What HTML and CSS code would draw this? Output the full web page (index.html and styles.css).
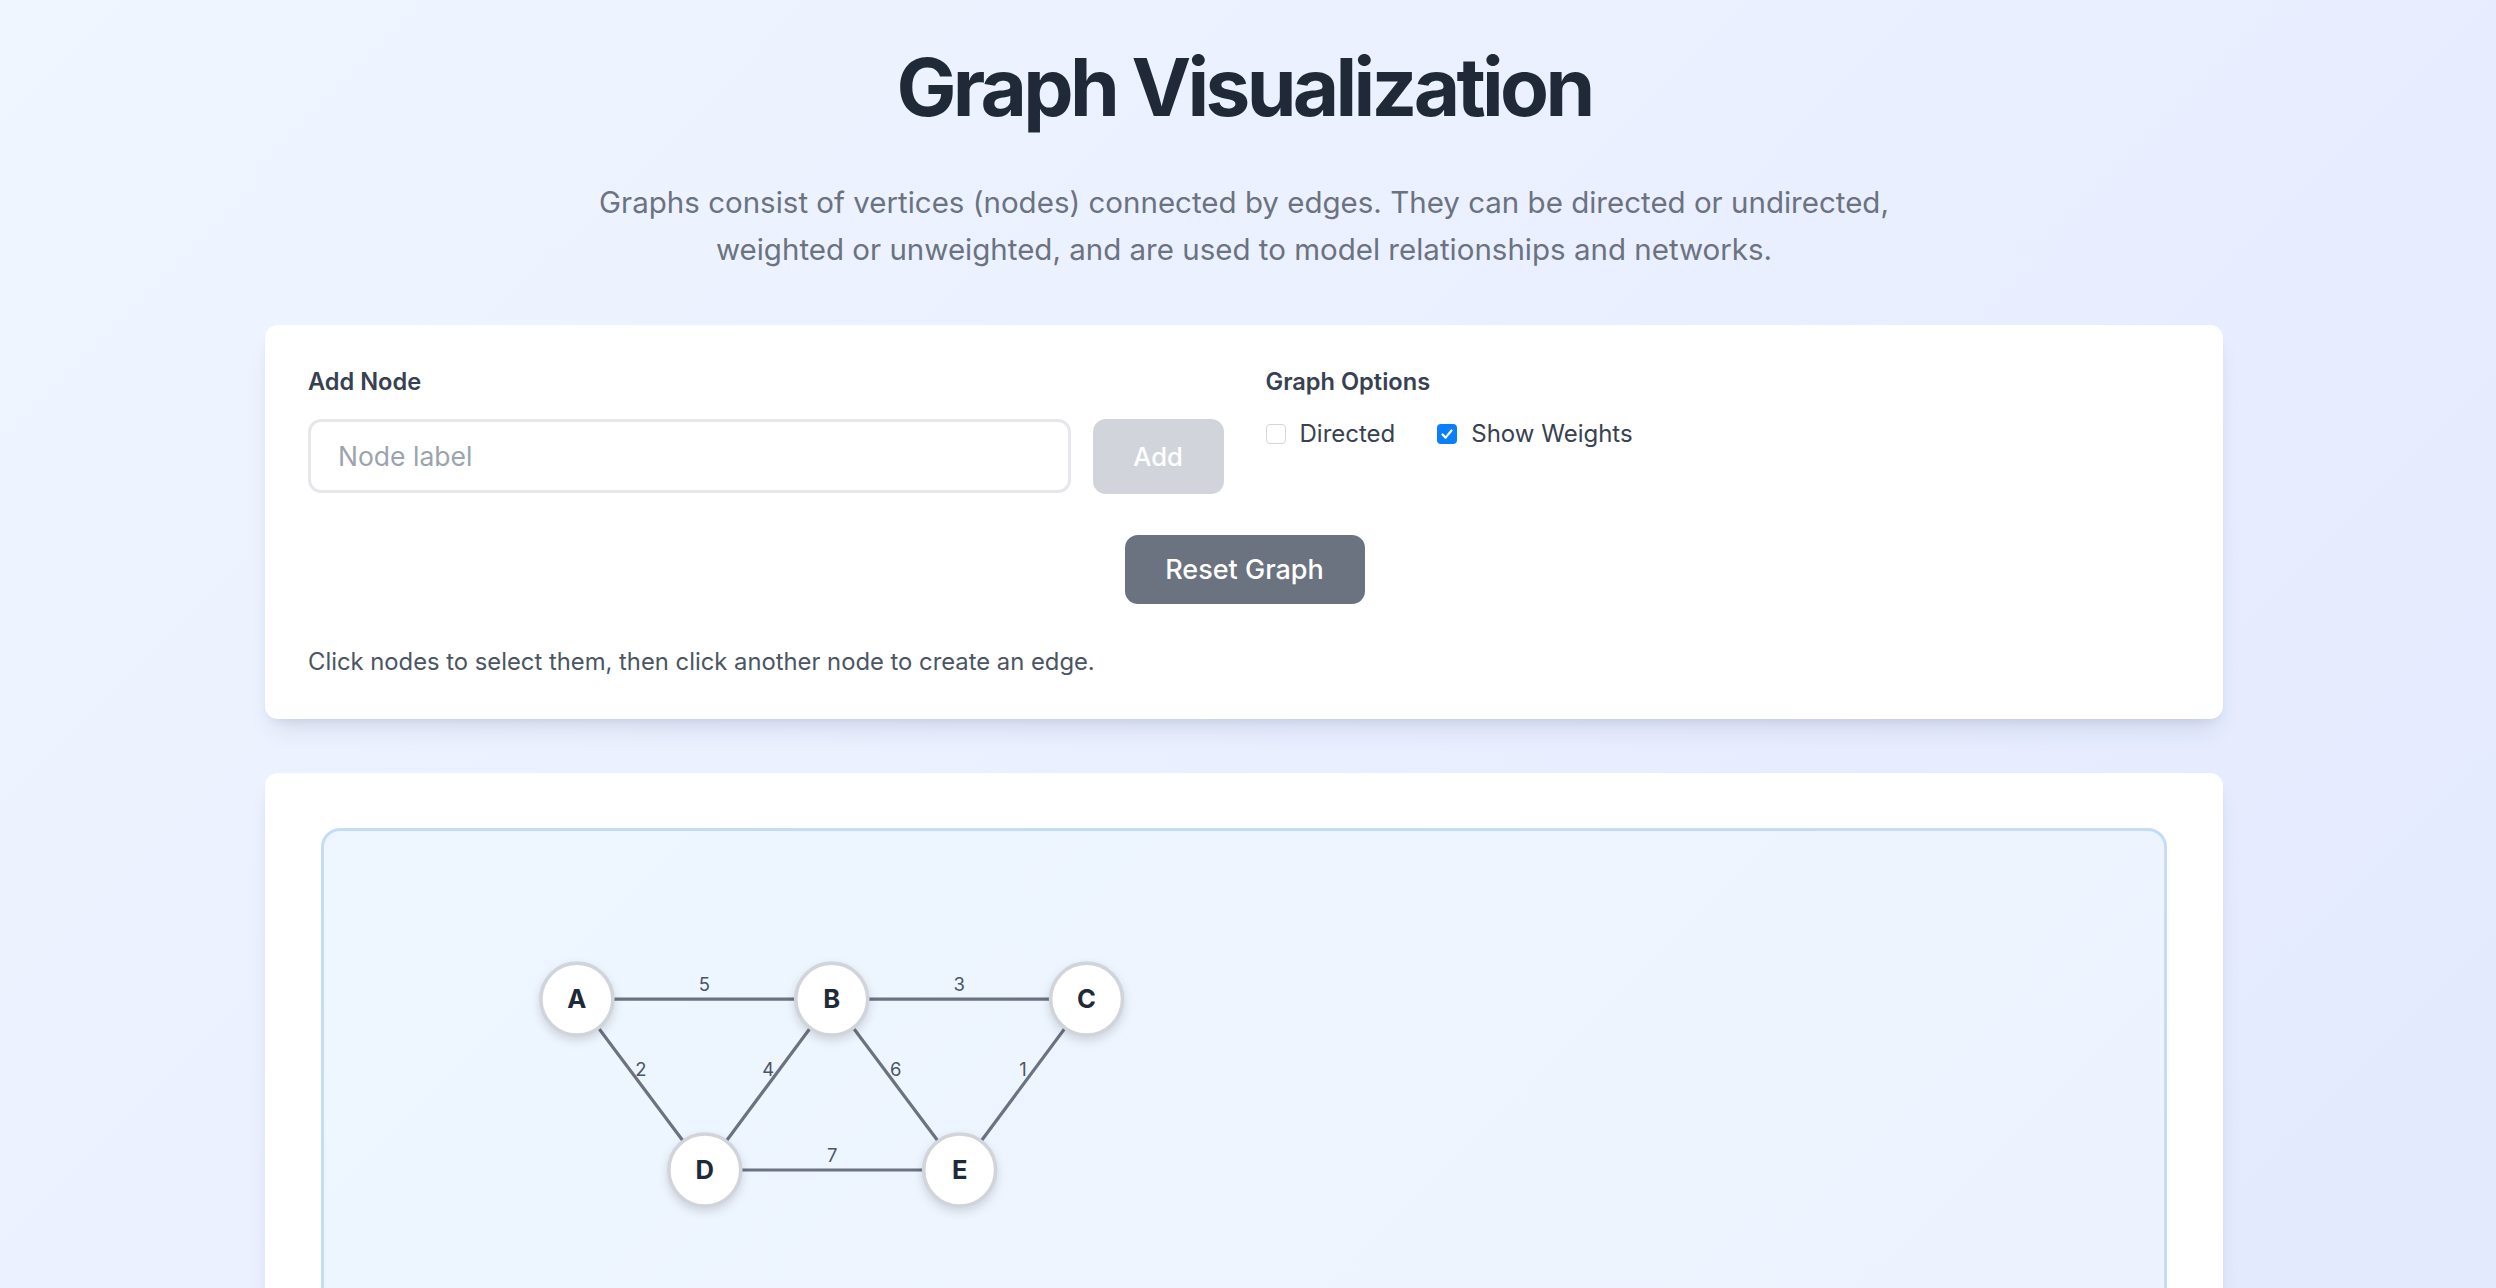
FILE: index.html
```html
<!DOCTYPE html>
<html lang="en">
<head>
<meta charset="utf-8">
<title>Graph Visualization</title>
<link rel="stylesheet" href="styles.css">
</head>
<body>
<main class="page">
  <header class="hero">
    <h1 class="title">Graph Visualization</h1>
    <p class="lead">Graphs consist of vertices (nodes) connected by edges. They can be directed or undirected, weighted or unweighted, and are used to model relationships and networks.</p>
  </header>

  <section class="card controls">
    <div class="control-grid">
      <div class="field">
        <div class="field-label">Add Node</div>
        <div class="add-row">
          <input class="text-input" type="text" placeholder="Node label">
          <button class="btn btn-add" type="button">Add</button>
        </div>
      </div>
      <div class="field">
        <div class="field-label">Graph Options</div>
        <div class="options">
          <label class="option"><span class="check"></span>Directed</label>
          <label class="option"><span class="check check-on"><svg viewBox="0 0 20 20" width="20" height="20"><path d="M5.5 10.5 L8.6 13.6 L14.5 6.5" fill="none" stroke="#fff" stroke-width="2.2" stroke-linecap="round" stroke-linejoin="round"/></svg></span>Show Weights</label>
        </div>
      </div>
    </div>
    <div class="reset-row">
      <button class="btn btn-reset" type="button">Reset Graph</button>
    </div>
    <p class="hint">Click nodes to select them, then click another node to create an edge.</p>
  </section>

  <section class="card canvas-card">
    <div class="canvas">
      <svg class="graph" viewBox="0 0 1841 720" width="1841" height="720">
        <g class="edges">
          <line x1="253" y1="168" x2="508" y2="168"/>
          <line x1="508" y1="168" x2="763" y2="168"/>
          <line x1="253" y1="168" x2="381" y2="339"/>
          <line x1="508" y1="168" x2="381" y2="339"/>
          <line x1="508" y1="168" x2="636" y2="339"/>
          <line x1="763" y1="168" x2="636" y2="339"/>
          <line x1="381" y1="339" x2="636" y2="339"/>
        </g>
        <g class="weights">
          <text x="380.5" y="160">5</text>
          <text x="635.5" y="160">3</text>
          <text x="317" y="245">2</text>
          <text x="444.5" y="245">4</text>
          <text x="572" y="245">6</text>
          <text x="699.5" y="245">1</text>
          <text x="508.5" y="331">7</text>
        </g>
        <g class="nodes">
          <circle cx="253" cy="168" r="36"/>
          <circle cx="508" cy="168" r="36"/>
          <circle cx="763" cy="168" r="36"/>
          <circle cx="381" cy="339" r="36"/>
          <circle cx="636" cy="339" r="36"/>
        </g>
        <g class="node-labels">
          <text x="253" y="177">A</text>
          <text x="508" y="177">B</text>
          <text x="763" y="177">C</text>
          <text x="381" y="348">D</text>
          <text x="636" y="348">E</text>
        </g>
      </svg>
    </div>
  </section>
</main>
</body>
</html>
```

FILE: styles.css
```css
* { box-sizing: border-box; }

html, body {
  margin: 0;
  padding: 0;
}

body {
  font-family: Inter, "Noto Sans", "Liberation Sans", sans-serif;
  color: #1f2937;
  background: linear-gradient(135deg, #eff6ff 0%, #e9efff 50%, #e2e8fd 100%);
  min-height: 100vh;
  padding-right: 8px;
}

.page {
  width: 1958px;
  margin: 0 auto;
  padding-top: 47px;
  padding-bottom: 60px;
}

.hero {
  text-align: center;
  margin-bottom: 52px;
}

.title {
  margin: 0 0 52px;
  font-size: 80px;
  line-height: 1;
  font-weight: 700;
  letter-spacing: -0.046em;
  color: #1f2937;
}

.lead {
  margin: 0 auto;
  max-width: 1330px;
  font-size: 29.5px;
  line-height: 46.8px;
  color: #6b7280;
}

.card {
  background: #fff;
  border-radius: 13px;
  box-shadow: 0 16px 26px -8px rgba(30, 41, 80, 0.12), 0 6px 10px -4px rgba(30, 41, 80, 0.08);
}

.controls {
  padding: 41px 42px 41px 43px;
  margin-bottom: 54px;
}

.control-grid {
  display: grid;
  grid-template-columns: 1fr 1fr;
  column-gap: 42px;
}

.field-label {
  font-size: 23.6px;
  line-height: 32px;
  font-weight: 600;
  color: #374151;
}

.add-row {
  display: flex;
  gap: 22px;
  margin-top: 21px;
}

.text-input {
  flex: 1;
  height: 74px;
  padding: 0 27px;
  border: 3px solid #e5e7eb;
  border-radius: 13px;
  font-family: inherit;
  font-size: 26.5px;
  color: #1f2937;
  background: #fff;
  outline: none;
}

.text-input::placeholder {
  color: #9ca3af;
}

.btn {
  border: 0;
  font-family: inherit;
  color: #fff;
  font-weight: 500;
  cursor: pointer;
}

.btn-add {
  width: 131px;
  height: 75px;
  background: #d1d5db;
  border-radius: 13px;
  font-size: 25.6px;
}

.options {
  display: flex;
  align-items: center;
  gap: 42px;
  margin-top: 18px;
}

.option {
  display: flex;
  align-items: center;
  gap: 14px;
  font-size: 24px;
  line-height: 36px;
  color: #374151;
}

.check {
  width: 20px;
  height: 20px;
  border: 1.6px solid #d1d5db;
  border-radius: 4px;
  background: #fff;
  display: inline-flex;
}

.check-on {
  border: 0;
  background: #0b7ffa;
}

.check-on svg {
  display: block;
}

.reset-row {
  display: flex;
  justify-content: center;
  margin-top: 41px;
}

.btn-reset {
  width: 240px;
  height: 69px;
  background: #6b7280;
  border-radius: 13px;
  font-size: 27px;
}

.hint {
  margin: 42px 0 0;
  font-size: 23.8px;
  line-height: 32px;
  color: #4b5563;
}

.canvas-card {
  padding: 55px 56px 56px;
}

.canvas {
  height: 760px;
  border: 3px solid #c4dcf6;
  border-radius: 19px;
  background: linear-gradient(135deg, #eef6ff 0%, #ecf3fe 100%);
  overflow: hidden;
}

.graph {
  display: block;
  width: 100%;
  height: 720px;
}

.edges line {
  stroke: #6b7280;
  stroke-width: 3.2;
}

.weights text {
  font-family: Inter, "Noto Sans", sans-serif;
  font-size: 18.5px;
  fill: #4b5563;
  text-anchor: middle;
}

.nodes circle {
  fill: #fff;
  stroke: #d1d5db;
  stroke-width: 3.6;
  filter: drop-shadow(0 4px 5px rgba(0, 0, 0, 0.13));
}

.node-labels text {
  font-family: Inter, "Noto Sans", sans-serif;
  font-size: 25.6px;
  font-weight: 700;
  fill: #1f2937;
  text-anchor: middle;
}
```
